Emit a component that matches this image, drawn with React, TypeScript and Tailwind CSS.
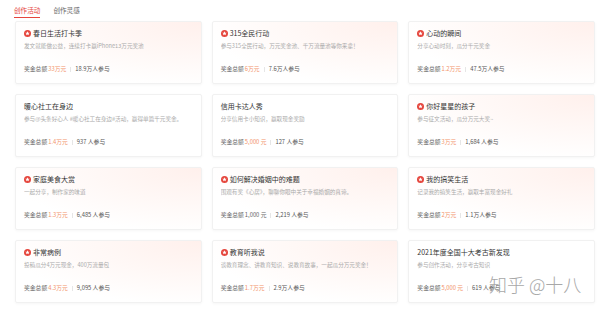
import React from "react";

type Card = {
  icon: boolean;
  title: string;
  desc: string;
  amount: string;
  orange: boolean;
  count: string;
};

const cards: Card[] = [
  { icon: true, title: "春日生活打卡季", desc: "发文就能做公益，连续打卡赢iPhone13万元奖池", amount: "33万元", orange: true, count: "18.9万人参与" },
  { icon: true, title: "315全民行动", desc: "参与315全民行动，万元奖金池、千万流量池等你来拿！", amount: "6万元", orange: true, count: "7.6万人参与" },
  { icon: true, title: "心动的瞬间", desc: "分享心动时刻，瓜分千元奖金", amount: "1.2万元", orange: true, count: "47.5万人参与" },
  { icon: false, title: "暖心社工在身边", desc: "参与@头条好心人 #暖心社工在身边#活动，赢得单篇千元奖金。", amount: "1.4万元", orange: true, count: "937 人参与" },
  { icon: false, title: "信用卡达人秀", desc: "分享信用卡小知识，赢取现金奖励", amount: "5,000 元", orange: true, count: "127 人参与" },
  { icon: true, title: "你好星星的孩子", desc: "参与征文活动，瓜分万元大奖~", amount: "3万元", orange: true, count: "1,684 人参与" },
  { icon: true, title: "家庭美食大赏", desc: "一起分享，制作家的味道", amount: "1.3万元", orange: true, count: "6,485 人参与" },
  { icon: true, title: "如何解决婚姻中的难题", desc: "围观有奖《心居》，聊聊你眼中关于幸福婚姻的真谛。", amount: "1,000 元", orange: false, count: "2,219 人参与" },
  { icon: true, title: "我的搞笑生活", desc: "记录我的搞笑生活，赢取丰富现金好礼", amount: "2万元", orange: true, count: "1.1万人参与" },
  { icon: true, title: "非常病例", desc: "投稿瓜分4万元现金，400万流量包", amount: "4.3万元", orange: true, count: "9,095 人参与" },
  { icon: true, title: "教育听我说", desc: "谈教育理念、讲教育知识、说教育故事，一起瓜分万元奖金！", amount: "1.7万元", orange: true, count: "2.9万人参与" },
  { icon: false, title: "2021年度全国十大考古新发现", desc: "参与创作活动，分享考古知识", amount: "5,000 元", orange: true, count: "619 人参与" },
];

function Badge() {
  return (
    <svg width="7" height="7" viewBox="0 0 16 16" className="shrink-0">
      <circle cx="8" cy="8" r="8" fill="#e5453c" />
      <polygon
        points="8,2.8 9.5,6 13,6.3 10.4,8.6 11.2,12.2 8,10.3 4.8,12.2 5.6,8.6 3,6.3 6.5,6"
        fill="#ffffff"
      />
    </svg>
  );
}

function CardView({ c }: { c: Card }) {
  return (
    <div
      className={
        "h-[63px] rounded-[2px] border border-[#f1f1f1] shadow-[0_1px_3px_rgba(0,0,0,0.04)] px-[8px] pt-[7px] flex flex-col " +
        (c.icon
          ? "bg-[radial-gradient(ellipse_at_top_right,#fff0ec_0%,#fff8f6_40%,#ffffff_75%)]"
          : "bg-white")
      }
    >
      <div className="flex items-center gap-[2px] h-[9px] text-[7px] leading-[9px] text-[#333]">
        {c.icon && <Badge />}
        <span className="whitespace-nowrap">{c.title}</span>
      </div>
      <div className="mt-[4px] h-[8px] text-[5.6px] leading-[8px] text-[#aaa] whitespace-nowrap overflow-hidden">
        {c.desc}
      </div>
      <div className="mt-[15px] flex items-center h-[8px] text-[5.8px] leading-[8px] whitespace-nowrap">
        <span className="text-[#666]">奖金总额</span>
        <span className={"ml-[1px] " + (c.orange ? "text-[#f2936a]" : "text-[#666]")}>{c.amount}</span>
        <span className="mx-[4px] w-px h-[5px] bg-[#e6e6e6]" />
        <span className="text-[#555]">{c.count}</span>
      </div>
    </div>
  );
}

export default function App() {
  return (
    <div className="relative w-[600px] h-[309px] bg-white overflow-hidden font-['Noto_Sans_CJK_SC',sans-serif]">
      <div className="flex gap-[13px] pl-[14px] h-[21px]">
        <div className="flex flex-col items-center pt-[6px]">
          <span className="text-[6.6px] leading-[9px] text-[#e5453c] whitespace-nowrap">创作活动</span>
          <span className="mt-[2px] w-full h-[1px] bg-[#e5453c]" />
        </div>
        <div className="flex flex-col items-center pt-[6px]">
          <span className="text-[6.6px] leading-[9px] text-[#666] whitespace-nowrap">创作灵感</span>
        </div>
      </div>
      <div className="grid grid-cols-3 gap-[10px] pl-[15px] pr-[5px]">
        {cards.map((c, i) => (
          <CardView key={i} c={c} />
        ))}
      </div>
      <div className="absolute left-[489px] top-[272px] text-[18px] leading-[24px] font-light text-[#a8a8a8] whitespace-nowrap pointer-events-none">
        知乎 @十八
      </div>
    </div>
  );
}
